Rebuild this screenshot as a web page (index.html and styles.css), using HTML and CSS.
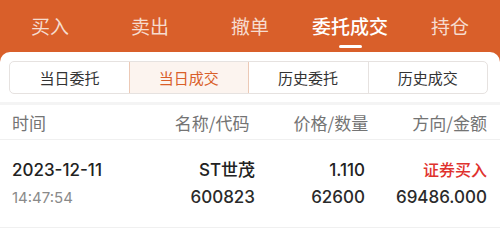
FILE: index.html
```html
<!DOCTYPE html>
<html lang="zh-CN">
<head>
<meta charset="utf-8">
<link rel="stylesheet" href="styles.css">
</head>
<body>
<div class="app">
  <nav class="topbar">
    <div class="tab">买入</div>
    <div class="tab">卖出</div>
    <div class="tab">撤单</div>
    <div class="tab active">委托成交</div>
    <div class="tab">持仓</div>
  </nav>
  <main class="panel">
    <div class="segments">
      <div class="seg">当日委托</div>
      <div class="seg on">当日成交</div>
      <div class="seg">历史委托</div>
      <div class="seg">历史成交</div>
    </div>
    <div class="sep"></div>
    <div class="thead">
      <div class="th left">时间</div>
      <div class="th">名称/代码</div>
      <div class="th">价格/数量</div>
      <div class="th">方向/金额</div>
    </div>
    <div class="row">
      <div class="cell left">
        <div class="l1">2023-12-11</div>
        <div class="l2 muted">14:47:54</div>
      </div>
      <div class="cell">
        <div class="l1">ST世茂</div>
        <div class="l2">600823</div>
      </div>
      <div class="cell">
        <div class="l1">1.110</div>
        <div class="l2">62600</div>
      </div>
      <div class="cell">
        <div class="l1 red">证券买入</div>
        <div class="l2">69486.000</div>
      </div>
    </div>
  </main>
</div>
</body>
</html>
```
FILE: styles.css
```css
* { box-sizing: border-box; }
html, body { margin: 0; padding: 0; background: #ffffff; }
body {
  font-family: "Noto Sans CJK SC", "Noto Sans", sans-serif;
  width: 500px;
  height: 241px;
  overflow: hidden;
}
.app { background: #d95f2a; }
.topbar {
  height: 52px;
  display: grid;
  grid-template-columns: repeat(5, 100px);
}
.tab {
  position: relative;
  text-align: center;
  font-size: 19px;
  line-height: 51px;
  color: rgba(255, 255, 255, 0.78);
}
.tab.active { color: #ffffff; font-weight: 500; }
.tab.active::after {
  content: "";
  position: absolute;
  left: 39px;
  width: 23px;
  top: 45px;
  height: 3px;
  border-radius: 2px;
  background: #ffffff;
}
.panel {
  background: #ffffff;
  border-radius: 10px 10px 0 0;
  padding-top: 9px;
  min-height: 189px;
}
.segments {
  margin: 0 12px 0 9px;
  height: 33px;
  display: grid;
  grid-template-columns: repeat(4, 1fr);
  border: 1px solid #e6e2e0;
  border-radius: 5px;
  overflow: hidden;
}
.seg {
  display: flex;
  align-items: center;
  justify-content: center;
  font-size: 15px;
  color: #333333;
  border-left: 1px solid #e6e2e0;
}
.seg:first-child { border-left: none; }
.seg.on {
  background: #fcf4ef;
  color: #d95f2a;
  border-left: 1px solid #ecc9b6;
  border-right: 1px solid #ecc9b6;
}
.seg.on + .seg { border-left: none; }
.sep {
  margin-top: 8px;
  height: 3px;
  background: #f4f4f4;
}
.thead {
  height: 35px;
  display: grid;
  grid-template-columns: repeat(4, 1fr);
  padding: 0 13px 0 12px;
  align-items: center;
  border-bottom: 1px solid #f0f0f0;
}
.th {
  text-align: right;
  font-size: 17px;
  color: #747474;
}
.left { text-align: left; }
.row {
  height: 88px;
  display: grid;
  grid-template-columns: 100px 143px 110px 1fr;
  padding: 0 13px 0 12px;
  align-content: center;
  border-bottom: 1px solid #f0f0f0;
  font-family: Inter, "Noto Sans CJK SC", sans-serif;
}
.cell { text-align: right; }
.cell.left { text-align: left; }
.l1 {
  font-size: 17px;
  line-height: 27px;
  font-weight: 500;
  color: #222222;
}
.l2 {
  font-size: 17px;
  line-height: 27px;
  font-weight: 500;
  color: #2a2a2a;
}
.l2.muted { color: #8a8a8a; font-weight: 400; font-size: 15px; }
.red { color: #e0322e; font-size: 16px; }
```
